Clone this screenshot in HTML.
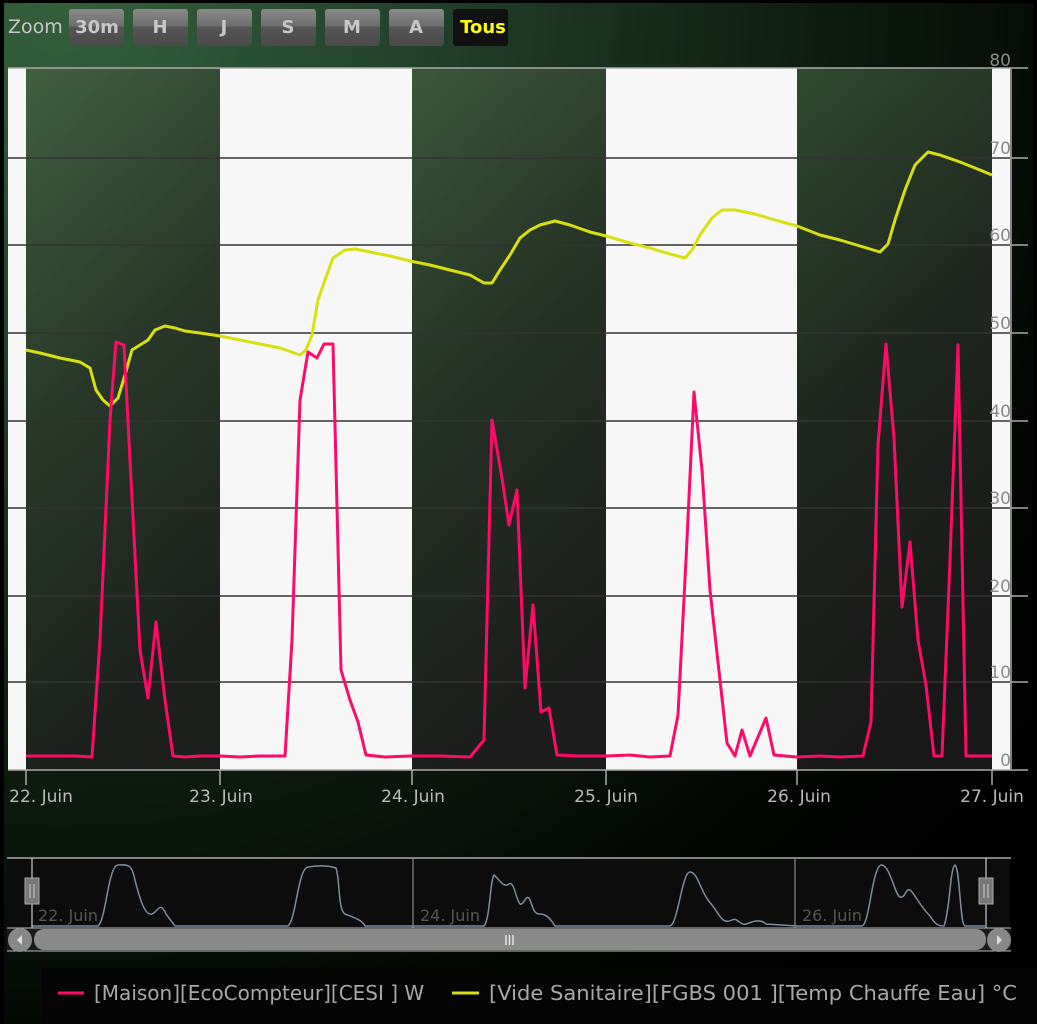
<!DOCTYPE html>
<html><head><meta charset="utf-8"><style>
html,body{margin:0;padding:0;width:1037px;height:1024px;overflow:hidden;background:#000}
svg{display:block}
text{font-family:"DejaVu Sans","Liberation Sans",sans-serif}
</style></head><body>
<svg width="1037" height="1024" viewBox="0 0 1037 1024" xmlns="http://www.w3.org/2000/svg">
<defs>
<radialGradient id="bg" cx="60" cy="0" r="1250" gradientUnits="userSpaceOnUse">
<stop offset="0" stop-color="#34603a"/><stop offset="0.3" stop-color="#21402a"/><stop offset="0.6" stop-color="#0e1d10"/><stop offset="0.85" stop-color="#030603"/><stop offset="1" stop-color="#000"/>
</radialGradient>
<linearGradient id="band" x1="0" y1="0" x2="0.25" y2="1">
<stop offset="0" stop-color="#3f603f"/><stop offset="0.5" stop-color="#283828"/><stop offset="1" stop-color="#1c1f1c"/>
</linearGradient>
<linearGradient id="band2" x1="0" y1="0" x2="0.25" y2="1">
<stop offset="0" stop-color="#3a583a"/><stop offset="0.5" stop-color="#243024"/><stop offset="1" stop-color="#1c1d1c"/>
</linearGradient>
<linearGradient id="band3" x1="0" y1="0" x2="0.25" y2="1">
<stop offset="0" stop-color="#2e4a2e"/><stop offset="0.5" stop-color="#1f261f"/><stop offset="1" stop-color="#181818"/>
</linearGradient>
<linearGradient id="btn" x1="0" y1="0" x2="0" y2="1">
<stop offset="0" stop-color="#8a8a8a"/><stop offset="0.45" stop-color="#6e6e6e"/><stop offset="0.5" stop-color="#555"/><stop offset="1" stop-color="#4a4a4a"/>
</linearGradient>
</defs>
<rect x="0" y="0" width="1037" height="1024" fill="url(#bg)"/>
<rect x="0" y="0" width="4" height="1024" fill="#000"/>
<rect x="1033" y="0" width="4" height="1024" fill="#000"/>
<rect x="0" y="0" width="1037" height="3" fill="#000"/>

<!-- buttons -->
<text x="8" y="33" font-size="19" fill="#c8c8c8">Zoom</text>
<g font-size="18" font-weight="bold" fill="#c8c8c8" text-anchor="middle">
<rect x="69" y="9" width="55" height="37" rx="3" fill="url(#btn)"/><text x="97" y="33">30m</text>
<rect x="133" y="9" width="55" height="37" rx="3" fill="url(#btn)"/><text x="160" y="33">H</text>
<rect x="197" y="9" width="55" height="37" rx="3" fill="url(#btn)"/><text x="224" y="33">J</text>
<rect x="261" y="9" width="55" height="37" rx="3" fill="url(#btn)"/><text x="288" y="33">S</text>
<rect x="325" y="9" width="55" height="37" rx="3" fill="url(#btn)"/><text x="352" y="33">M</text>
<rect x="389" y="9" width="55" height="37" rx="3" fill="url(#btn)"/><text x="416" y="33">A</text>
<rect x="453" y="9" width="55" height="37" rx="3" fill="#111"/><text x="483" y="33" fill="#ffff00">Tous</text>
</g>

<!-- plot -->
<rect x="8" y="68" width="1002" height="702" fill="#f7f7f7"/>
<rect x="26" y="68" width="194" height="702" fill="url(#band)"/>
<rect x="412" y="68" width="194" height="702" fill="url(#band2)"/>
<rect x="797" y="68" width="195" height="702" fill="url(#band3)"/>

<g stroke="#333" stroke-width="1.5">
<line x1="8" y1="158" x2="1010" y2="158"/><line x1="8" y1="245" x2="1010" y2="245"/>
<line x1="8" y1="333" x2="1010" y2="333"/><line x1="8" y1="421" x2="1010" y2="421"/>
<line x1="8" y1="508" x2="1010" y2="508"/><line x1="8" y1="596" x2="1010" y2="596"/>
<line x1="8" y1="682" x2="1010" y2="682"/>
</g>
<g stroke="#aaa" stroke-width="1.5">
<line x1="8" y1="68" x2="1028" y2="68"/>
<line x1="1010" y1="158" x2="1028" y2="158"/><line x1="1010" y1="245" x2="1028" y2="245"/>
<line x1="1010" y1="333" x2="1028" y2="333"/><line x1="1010" y1="421" x2="1028" y2="421"/>
<line x1="1010" y1="508" x2="1028" y2="508"/><line x1="1010" y1="596" x2="1028" y2="596"/>
<line x1="1010" y1="682" x2="1028" y2="682"/><line x1="8" y1="770" x2="1028" y2="770"/>
<line x1="1011" y1="68" x2="1011" y2="770"/>
<line x1="26" y1="770" x2="26" y2="785"/><line x1="220" y1="770" x2="220" y2="785"/>
<line x1="412" y1="770" x2="412" y2="785"/><line x1="606" y1="770" x2="606" y2="785"/>
<line x1="797" y1="770" x2="797" y2="785"/><line x1="992" y1="770" x2="992" y2="785"/>
</g>
<g font-size="17" fill="#8a8a8a" text-anchor="end">
<text x="1011" y="66">80</text><text x="1011" y="154">70</text><text x="1011" y="241">60</text>
<text x="1011" y="329">50</text><text x="1011" y="417">40</text><text x="1011" y="504">30</text>
<text x="1011" y="592">20</text><text x="1011" y="678">10</text><text x="1011" y="766">0</text>
</g>
<g font-size="17" fill="#bbb" text-anchor="middle">
<text x="41" y="802">22. Juin</text><text x="221" y="802">23. Juin</text><text x="413" y="802">24. Juin</text>
<text x="606" y="802">25. Juin</text><text x="799" y="802">26. Juin</text><text x="992" y="802">27. Juin</text>
</g>

<polyline fill="none" stroke="#d8e010" stroke-width="3" stroke-linejoin="round" points="26,350 40,353 60,358 80,362 90,368 96,390 103,400 110,406 118,398 125,375 132,350 140,345 148,340 155,330 165,326 175,328 185,331 200,333 220,336 240,340 260,344 280,348 300,355 306,350 312,335 318,300 325,280 333,258 345,250 355,249 370,252 390,256 410,261 430,265 450,270 470,275 484,283 492,283 500,270 510,255 520,238 530,230 540,225 555,221 570,225 590,232 606,236 630,243 650,248 670,254 685,258 692,250 700,235 712,218 722,210 735,210 755,214 775,220 797,226 820,235 840,240 860,246 880,252 888,244 895,220 905,190 915,165 928,152 940,155 960,162 980,170 992,175"/>
<polyline fill="none" stroke="#ff0a68" stroke-width="3" stroke-linejoin="round" points="26,756 60,756 75,756 92,757 100,640 110,420 116,342 124,345 130,460 140,650 148,698 156,622 165,700 173,756 185,757 200,756 220,756 240,757 260,756 285,756 292,640 300,400 308,352 317,358 324,344 333,344 341,670 350,700 358,722 366,755 385,757 410,756 440,756 470,757 484,740 492,420 502,478 509,525 517,490 525,688 533,605 541,712 549,708 557,755 580,756 606,756 630,755 650,757 670,756 678,715 686,560 694,392 702,470 710,590 720,680 727,743 735,756 742,730 750,756 766,718 774,755 797,757 820,756 840,757 863,756 871,722 878,445 886,344 894,438 902,607 910,542 918,640 926,685 934,756 942,756 950,560 958,345 966,756 992,756"/>

<!-- navigator -->
<rect x="7" y="858" width="1003" height="70" fill="#0c0c0c"/>
<line x1="7" y1="858" x2="1011" y2="858" stroke="#aaa" stroke-width="1.5"/>
<line x1="413" y1="858" x2="413" y2="928" stroke="#888" stroke-width="1.2"/>
<line x1="795" y1="858" x2="795" y2="928" stroke="#888" stroke-width="1.2"/>
<g font-size="16" fill="#555">
<text x="38" y="921">22. Juin</text><text x="420" y="921">24. Juin</text><text x="802" y="921">26. Juin</text>
</g>
<path fill="none" stroke="#7a8da0" stroke-width="1.5" d="M32,926 L98,926 C106,920 108,866 118,865 C130,864 132,866 135,880 C140,900 145,916 152,914 C158,912 160,900 166,914 L175,926 L288,926 C296,920 298,868 308,867 C320,865 330,866 336,868 C340,880 338,910 345,914 C355,918 362,920 365,926 L484,926 C490,920 490,880 494,875 C500,880 503,888 509,884 C514,880 516,900 520,904 C524,906 526,892 530,900 C534,910 534,914 540,914 C546,914 550,918 555,926 L670,926 C678,924 682,872 690,872 C698,872 700,892 712,905 C720,915 722,925 732,920 C738,917 740,926 746,924 C752,922 760,918 766,924 L797,926 L862,926 C870,924 872,864 882,865 C890,866 895,895 900,897 C906,899 906,884 912,892 C918,900 922,908 930,916 C936,926 940,926 944,926 C950,910 950,868 955,865 C960,868 960,926 965,926 L985,926"/>
<line x1="32" y1="858" x2="32" y2="950" stroke="#ccc" stroke-width="1.2"/>
<line x1="986" y1="858" x2="986" y2="950" stroke="#ccc" stroke-width="1.2"/>
<rect x="25" y="878" width="14" height="26" fill="#777" stroke="#aaa"/>
<line x1="30" y1="884" x2="30" y2="898" stroke="#ccc"/><line x1="34" y1="884" x2="34" y2="898" stroke="#ccc"/>
<rect x="979" y="878" width="14" height="26" fill="#777" stroke="#aaa"/>
<line x1="984" y1="884" x2="984" y2="898" stroke="#ccc"/><line x1="988" y1="884" x2="988" y2="898" stroke="#ccc"/>

<!-- scrollbar -->
<rect x="7" y="928" width="1004" height="23" fill="#1a1a1a"/>
<line x1="7" y1="928" x2="1011" y2="928" stroke="#bbb"/>
<line x1="7" y1="951" x2="1011" y2="951" stroke="#bbb"/>
<circle cx="20" cy="940" r="12" fill="#888"/>
<path d="M22,935 L17,940 L22,945 Z" fill="#ddd"/>
<circle cx="999" cy="940" r="12" fill="#888"/>
<path d="M997,935 L1002,940 L997,945 Z" fill="#ddd"/>
<rect x="34" y="929" width="952" height="21" rx="10" fill="#8a8a8a"/>
<g stroke="#eee" stroke-width="1.3"><line x1="506" y1="935" x2="506" y2="945"/><line x1="509.5" y1="935" x2="509.5" y2="945"/><line x1="513" y1="935" x2="513" y2="945"/></g>

<!-- legend -->
<rect x="42" y="968" width="995" height="56" fill="#050505"/>
<line x1="58" y1="993" x2="84" y2="993" stroke="#ff0a68" stroke-width="3"/>
<text x="94" y="1000" font-size="20" fill="#a8a8a8">[Maison][EcoCompteur][CESI ] W</text>
<line x1="452" y1="993" x2="479" y2="993" stroke="#d8e010" stroke-width="3"/>
<text x="489" y="1000" font-size="20" fill="#a8a8a8" textLength="528" lengthAdjust="spacingAndGlyphs">[Vide Sanitaire][FGBS 001 ][Temp Chauffe Eau] °C</text>
</svg>
</body></html>
